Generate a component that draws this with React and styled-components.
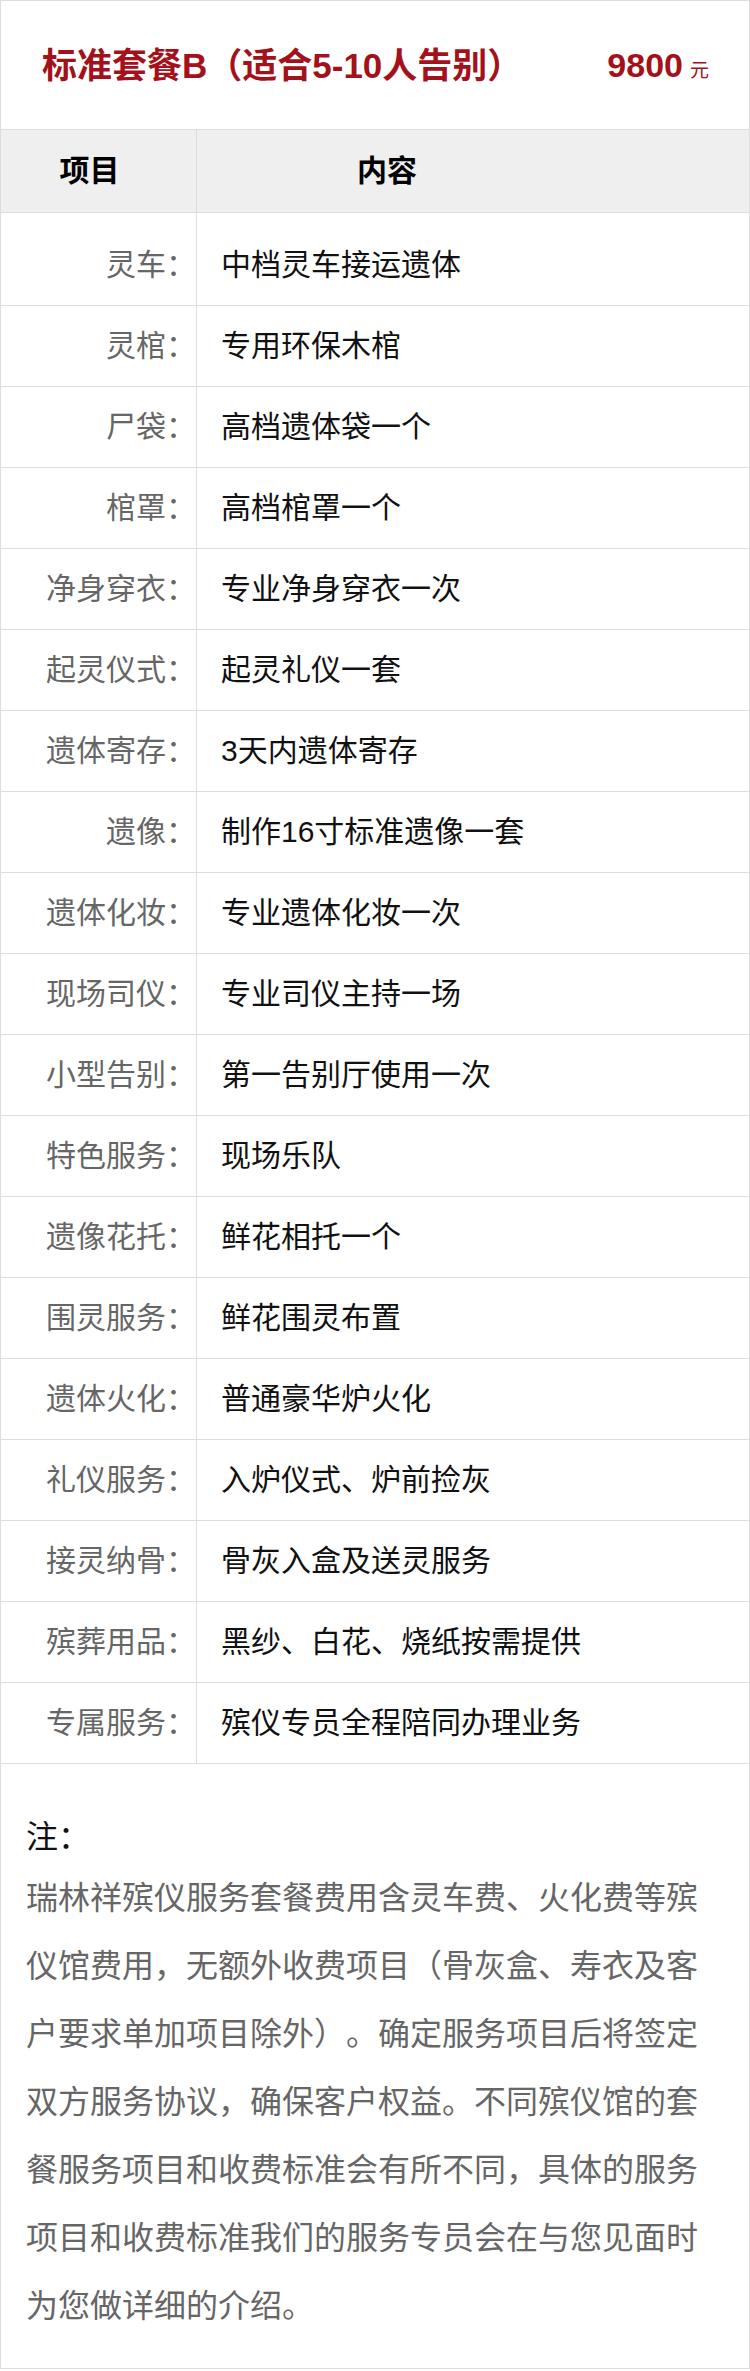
import React from "react";
import styled, { createGlobalStyle } from "styled-components";

const items = [
  ["灵车：", "中档灵车接运遗体"],
  ["灵棺：", "专用环保木棺"],
  ["尸袋：", "高档遗体袋一个"],
  ["棺罩：", "高档棺罩一个"],
  ["净身穿衣：", "专业净身穿衣一次"],
  ["起灵仪式：", "起灵礼仪一套"],
  ["遗体寄存：", "3天内遗体寄存"],
  ["遗像：", "制作16寸标准遗像一套"],
  ["遗体化妆：", "专业遗体化妆一次"],
  ["现场司仪：", "专业司仪主持一场"],
  ["小型告别：", "第一告别厅使用一次"],
  ["特色服务：", "现场乐队"],
  ["遗像花托：", "鲜花相托一个"],
  ["围灵服务：", "鲜花围灵布置"],
  ["遗体火化：", "普通豪华炉火化"],
  ["礼仪服务：", "入炉仪式、炉前捡灰"],
  ["接灵纳骨：", "骨灰入盒及送灵服务"],
  ["殡葬用品：", "黑纱、白花、烧纸按需提供"],
  ["专属服务：", "殡仪专员全程陪同办理业务"],
];

const GlobalStyle = createGlobalStyle`
  body {
    margin: 0;
    background: #fff;
    font-family: "Liberation Sans", "Noto Sans CJK SC", sans-serif;
    text-spacing-trim: space-all;
  }
`;

const Card = styled.div`
  width: 750px;
  box-sizing: border-box;
  border: 1px solid #dddddd;
  background: #fff;
`;

const TitleBar = styled.div`
  height: 128px;
  display: flex;
  align-items: center;
  justify-content: space-between;
  padding: 0 40px 0 41px;
  border-bottom: 1px solid #dddddd;
  color: #a3111a;
`;

const Title = styled.h1`
  margin: 0;
  font-size: 35px;
  font-weight: 700;
  line-height: 1;
`;

const Price = styled.div`
  display: flex;
  align-items: baseline;
  font-size: 34px;
  font-weight: 700;
  line-height: 1;

  small {
    margin-left: 7px;
    font-size: 19px;
    font-weight: 400;
  }
`;

const Row = styled.div`
  display: grid;
  grid-template-columns: 196px 1fr;
  border-bottom: 1px solid #dddddd;
  background: ${(p) => (p.$head ? "#efefef" : "#fff")};
`;

const Cell = styled.div`
  display: flex;
  align-items: center;
  box-sizing: border-box;
  height: ${(p) => (p.$head ? 82 : p.$first ? 92 : 80)}px;
  padding-top: ${(p) => (p.$first ? 12 : 0)}px;
  font-size: 30px;
  line-height: 1;
`;

const HeadCell = styled(Cell)`
  justify-content: center;
  font-weight: 700;
  color: #000;
`;

const Label = styled(Cell)`
  justify-content: flex-end;
  border-right: 1px solid #dddddd;
  color: #666;
`;

const Content = styled(Cell)`
  padding-left: 24px;
  color: #111;
`;

const Note = styled.div`
  padding: 46px 26px 28px 25px;
`;

const NoteTitle = styled.div`
  font-size: 32px;
  line-height: 54px;
  color: #111;
`;

const NoteText = styled.p`
  margin: 0;
  font-size: 32px;
  line-height: 68px;
  color: #666;
`;

export default function App() {
  return (
    <>
      <GlobalStyle />
      <Card>
        <TitleBar>
          <Title>标准套餐B（适合5-10人告别）</Title>
          <Price>
            9800<small>元</small>
          </Price>
        </TitleBar>

        <Row $head>
          <HeadCell $head style={{ borderRight: "1px solid #dddddd", paddingRight: 18 }}>
            项目
          </HeadCell>
          <HeadCell $head style={{ paddingRight: 172 }}>
            内容
          </HeadCell>
        </Row>

        {items.map(([label, content], i) => (
          <Row key={label}>
            <Label $first={i === 0}>{label}</Label>
            <Content $first={i === 0}>{content}</Content>
          </Row>
        ))}

        <Note>
          <NoteTitle>注：</NoteTitle>
          <NoteText>
            瑞林祥殡仪服务套餐费用含灵车费、火化费等殡仪馆费用，无额外收费项目（骨灰盒、寿衣及客户要求单加项目除外）。确定服务项目后将签定双方服务协议，确保客户权益。不同殡仪馆的套餐服务项目和收费标准会有所不同，具体的服务项目和收费标准我们的服务专员会在与您见面时为您做详细的介绍。
          </NoteText>
        </Note>
      </Card>
    </>
  );
}
